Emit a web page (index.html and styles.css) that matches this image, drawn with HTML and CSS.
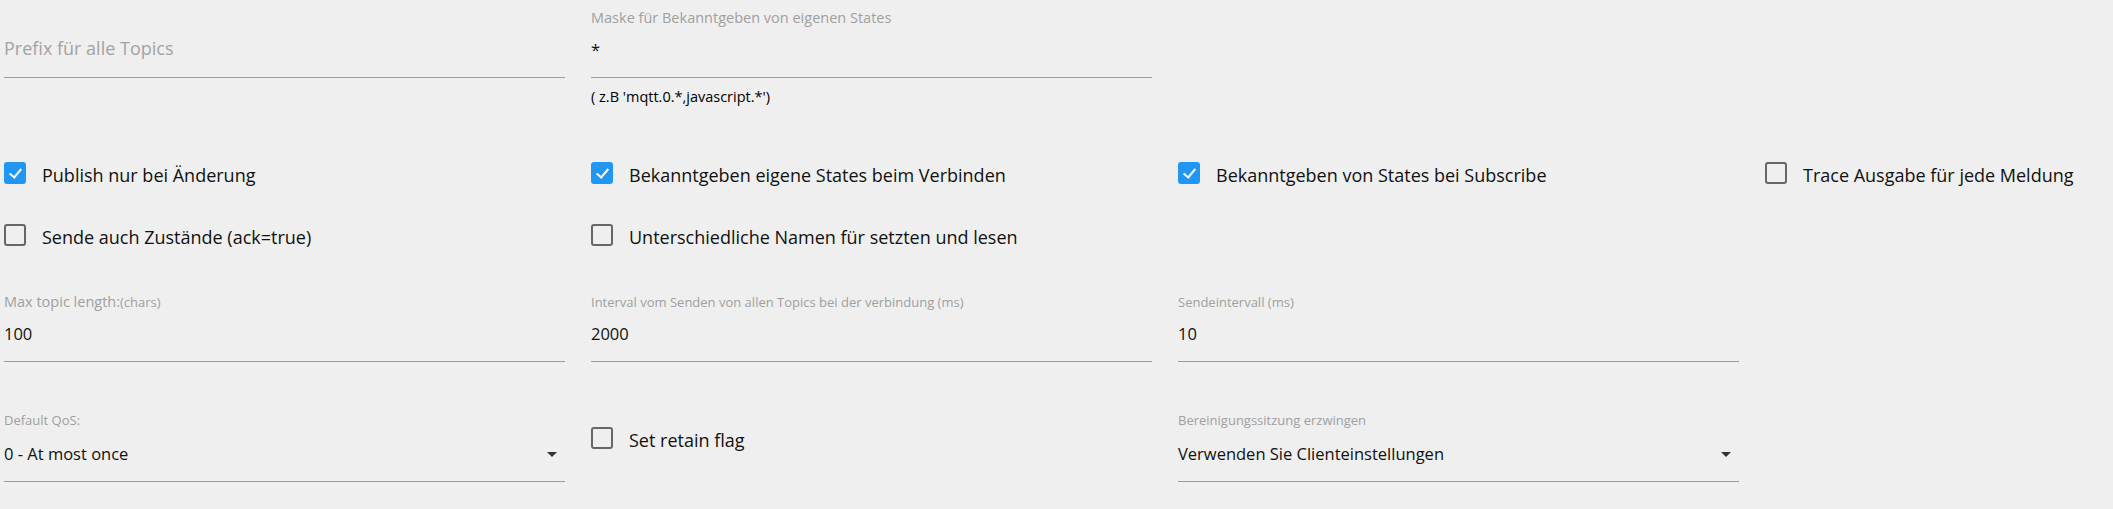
FILE: index.html
```html
<!DOCTYPE html>
<html>

<head>
  <title>MQTT Einstellungen</title>
  <link rel="stylesheet" href="styles.css">
</head>

<body>
  <div class="settings">
    <!-- Prefix / Maske -->
    <div class="row row-top">
      <div class="field">
        <div class="field-label"></div>
        <div class="field-input placeholder">Prefix für alle Topics</div>
      </div>
      <div class="field">
        <div class="field-label big">Maske für Bekanntgeben von eigenen States</div>
        <div class="field-input">*</div>
        <div class="field-help">( z.B 'mqtt.0.*,javascript.*')</div>
      </div>
    </div>

    <!-- Checkboxes -->
    <div class="row row-checks">
      <div class="col">
        <label class="check"><span class="box checked"></span>Publish nur bei Änderung</label>
        <label class="check"><span class="box"></span>Sende auch Zustände (ack=true)</label>
      </div>
      <div class="col">
        <label class="check"><span class="box checked"></span>Bekanntgeben eigene States beim Verbinden</label>
        <label class="check"><span class="box"></span>Unterschiedliche Namen für setzten und lesen</label>
      </div>
      <div class="col">
        <label class="check"><span class="box checked"></span>Bekanntgeben von States bei Subscribe</label>
      </div>
      <div class="col">
        <label class="check"><span class="box"></span>Trace Ausgabe für jede Meldung</label>
      </div>
    </div>

    <!-- Numbers -->
    <div class="row row-numbers">
      <div class="field">
        <div class="field-label big">Max topic length:<small>(chars)</small></div>
        <div class="field-input">100</div>
      </div>
      <div class="field">
        <div class="field-label">Interval vom Senden von allen Topics bei der verbindung (ms)</div>
        <div class="field-input">2000</div>
      </div>
      <div class="field">
        <div class="field-label">Sendeintervall (ms)</div>
        <div class="field-input">10</div>
      </div>
    </div>

    <!-- Selects -->
    <div class="row row-selects">
      <div class="field">
        <div class="field-label">Default QoS:</div>
        <div class="field-input select">0 - At most once</div>
      </div>
      <div class="col">
        <label class="check check-single"><span class="box"></span>Set retain flag</label>
      </div>
      <div class="field">
        <div class="field-label">Bereinigungssitzung erzwingen</div>
        <div class="field-input select">Verwenden Sie Clienteinstellungen</div>
      </div>
    </div>
  </div>
</body>

</html>
```

FILE: styles.css
```css
* {
  margin: 0;
  padding: 0;
  box-sizing: border-box;
}

body {
  font-family: "Open Sans", "Liberation Sans", sans-serif;
  background-color: #efefef;
  color: #111;
  overflow: hidden;
}

.settings {
  padding-left: 4px;
}

/* 4 columns, the last one runs off the page */
.row {
  display: grid;
  grid-template-columns: 561px 561px 561px 561px;
  column-gap: 26px;
}

.row-top {
  padding-top: 8px;
}

.row-checks {
  padding-top: 37px;
}

.row-numbers {
  padding-top: 24px;
}

.row-selects {
  padding-top: 48px;
}

/* text fields */
.field-label {
  height: 20px;
  line-height: 20px;
  font-size: 13px;
  color: #a0a0a0;
  white-space: nowrap;
}

.field-label.big {
  font-size: 14.5px;
}

.field-label small {
  font-size: 13px;
}

.field-input {
  position: relative;
  margin-top: 8px;
  height: 42px;
  padding-bottom: 13px;
  line-height: 28px;
  font-size: 16.5px;
  border-bottom: 1px solid #9c9c9c;
}

.placeholder {
  color: #a3a3a3;
  font-size: 18px;
  line-height: 24px;
}

.field-help {
  margin-top: 9px;
  line-height: 20px;
  font-size: 14.5px;
  color: #000;
}

.select {
  margin-top: 10px;
}

.select::after {
  content: "";
  position: absolute;
  right: 8px;
  top: 12px;
  border-left: 5px solid transparent;
  border-right: 5px solid transparent;
  border-top: 5px solid #333;
}

/* checkboxes */
.check {
  display: flex;
  align-items: center;
  height: 62px;
  font-size: 18px;
  color: #111;
  white-space: nowrap;
}

.check-single {
  margin-top: 1px;
  height: 58px;
}

.box {
  flex: none;
  width: 22px;
  height: 22px;
  margin-right: 16px;
  margin-top: -4px;
  border: 2px solid #666;
  border-radius: 3px;
}

.box.checked {
  position: relative;
  border: none;
  background-color: #2196f3;
}

.box.checked::after {
  content: "";
  position: absolute;
  left: 8px;
  top: 4px;
  width: 5px;
  height: 10px;
  border-right: 2px solid #fff;
  border-bottom: 2px solid #fff;
  transform: rotate(40deg);
}
```
